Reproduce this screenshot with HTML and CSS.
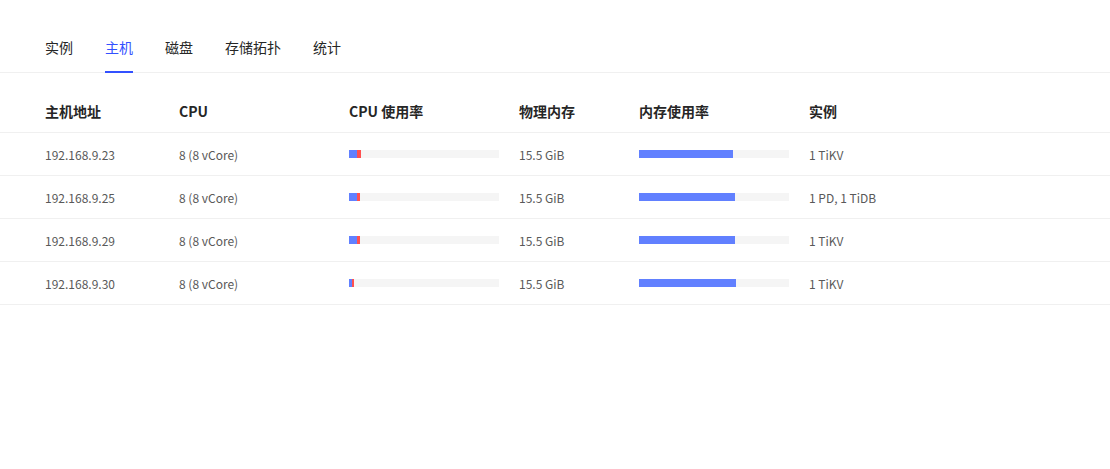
FILE: index.html
```html
<!DOCTYPE html>
<html lang="zh">
<head>
<meta charset="utf-8">
<link rel="stylesheet" href="styles.css">
</head>
<body>
<div class="tabs">
  <div class="tab">实例</div>
  <div class="tab active">主机</div>
  <div class="tab">磁盘</div>
  <div class="tab">存储拓扑</div>
  <div class="tab">统计</div>
</div>
<div class="table">
  <div class="row head">
    <div class="c c1">主机地址</div>
    <div class="c c2">CPU</div>
    <div class="c c3">CPU 使用率</div>
    <div class="c c4">物理内存</div>
    <div class="c c5">内存使用率</div>
    <div class="c c6">实例</div>
  </div>
  <div class="row">
    <div class="c c1">192.168.9.23</div>
    <div class="c c2">8 (8 vCore)</div>
    <div class="c c3"><div class="bar"><span class="blue" style="width:8px"></span><span class="red" style="width:4px"></span></div></div>
    <div class="c c4">15.5 GiB</div>
    <div class="c c5"><div class="bar"><span class="blue" style="width:94px"></span></div></div>
    <div class="c c6">1 TiKV</div>
  </div>
  <div class="row">
    <div class="c c1">192.168.9.25</div>
    <div class="c c2">8 (8 vCore)</div>
    <div class="c c3"><div class="bar"><span class="blue" style="width:8px"></span><span class="red" style="width:3px"></span></div></div>
    <div class="c c4">15.5 GiB</div>
    <div class="c c5"><div class="bar"><span class="blue" style="width:96px"></span></div></div>
    <div class="c c6">1 PD, 1 TiDB</div>
  </div>
  <div class="row">
    <div class="c c1">192.168.9.29</div>
    <div class="c c2">8 (8 vCore)</div>
    <div class="c c3"><div class="bar"><span class="blue" style="width:8px"></span><span class="red" style="width:3px"></span></div></div>
    <div class="c c4">15.5 GiB</div>
    <div class="c c5"><div class="bar"><span class="blue" style="width:96px"></span></div></div>
    <div class="c c6">1 TiKV</div>
  </div>
  <div class="row">
    <div class="c c1">192.168.9.30</div>
    <div class="c c2">8 (8 vCore)</div>
    <div class="c c3"><div class="bar"><span class="blue" style="width:3px"></span><span class="red" style="width:2px"></span></div></div>
    <div class="c c4">15.5 GiB</div>
    <div class="c c5"><div class="bar"><span class="blue" style="width:97px"></span></div></div>
    <div class="c c6">1 TiKV</div>
  </div>
</div>
</body>
</html>
```
FILE: styles.css
```css
* { box-sizing: border-box; }
html, body { margin: 0; padding: 0; background: #fff; }
body {
  font-family: "Noto Sans CJK SC", "Noto Sans", sans-serif;
  color: #333;
  width: 1110px;
  height: 469px;
  overflow: hidden;
}
.tabs {
  display: flex;
  gap: 32px;
  padding: 0 0 0 45px;
  margin-top: 29px;
  height: 44px;
  border-bottom: 1px solid #f0f0f0;
}
.tab {
  font-size: 14px;
  line-height: 20px;
  padding-top: 8px;
  height: 43px;
  color: #262626;
  position: relative;
}
.tab.active { color: #3351ff; }
.tab.active::after {
  content: "";
  position: absolute;
  left: 0; right: 0;
  bottom: -1px;
  height: 2px;
  background: #3351ff;
}
.table { margin-top: 17px; }
.row {
  display: flex;
  height: 43px;
  align-items: center;
  border-bottom: 1px solid #f0f0f0;
  font-size: 12px;
  color: #595959;
}
.row.head {
  font-size: 14px;
  font-weight: 600;
  color: #262626;
  height: 43px;
}
.c { flex: none; }
.c1 { width: 179px; padding-left: 45px; }
.c2 { width: 170px; }
.c3 { width: 170px; }
.c4 { width: 120px; }
.c5 { width: 170px; }
.c6 { flex: 1; }
.bar {
  width: 150px;
  height: 8px;
  background: #f5f5f5;
  display: flex;
}
.bar span { display: block; height: 8px; }
.blue { background: #6180ff; }
.red { background: #ff5050; }
```
